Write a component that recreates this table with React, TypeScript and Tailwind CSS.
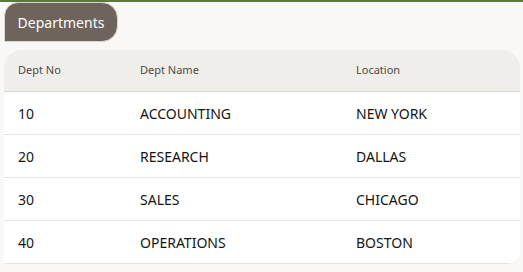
import React from 'react';

const depts = [
  { no: 10, name: 'ACCOUNTING', loc: 'NEW YORK' },
  { no: 20, name: 'RESEARCH', loc: 'DALLAS' },
  { no: 30, name: 'SALES', loc: 'CHICAGO' },
  { no: 40, name: 'OPERATIONS', loc: 'BOSTON' },
];

const App = () => {
  return (
    <div className="w-[523px] h-[272px] bg-[#f9f8f6] border-t-2 border-[#5b7a3c] overflow-hidden" style={{ fontFamily: '"Noto Sans", "Open Sans", sans-serif' }}>
      <div className="pl-[4px]">
        <div className="w-[114px] h-[40px] bg-[#6f645c] text-white text-[14px] flex items-center justify-center rounded-tl-[14px] rounded-tr-[16px] rounded-br-[16px] border border-[#d9d6d2]">
          Departments
        </div>
      </div>
      <div className="ml-[4px] mt-[8px] w-[516px] bg-white rounded-t-[18px] rounded-br-[14px] overflow-hidden">
        <div className="flex items-center h-[42px] bg-[#f0eeeb] border-b border-[#d9d7d3] text-[11px] text-[#4f4a45]">
          <div className="w-[136px] pl-[14px]">Dept No</div>
          <div className="w-[216px]">Dept Name</div>
          <div>Location</div>
        </div>
        {depts.map((d) => (
          <div key={d.no} className="flex items-center h-[43px] border-b border-[#e6e4e1] text-[14px] text-[#161513]">
            <div className="w-[136px] pl-[14px]">{d.no}</div>
            <div className="w-[216px]">{d.name}</div>
            <div>{d.loc}</div>
          </div>
        ))}
      </div>
    </div>
  );
};

export default App;
